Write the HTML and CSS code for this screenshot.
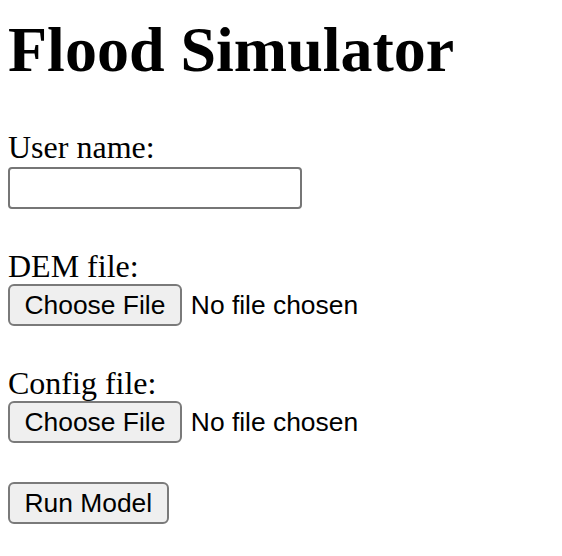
FILE: index.html
```html
<!DOCTYPE html>
<html lang="en">
<head>
<meta charset="utf-8">
<title>Flood Simulator</title>
<link rel="stylesheet" href="styles.css">
</head>
<body>
<h1 class="title">Flood Simulator</h1>
<form class="form">
  <div class="field">
    <label class="label" for="user">User name:</label>
    <input class="text-input" type="text" id="user" name="user">
  </div>
  <div class="field">
    <label class="label" for="dem">DEM file:</label>
    <input class="file-input" type="file" id="dem" name="dem">
  </div>
  <div class="field">
    <label class="label" for="config">Config file:</label>
    <input class="file-input" type="file" id="config" name="config">
  </div>
  <div class="field">
    <button class="button" type="submit">Run Model</button>
  </div>
</form>
</body>
</html>
```
FILE: styles.css
```css
html, body {
  margin: 0;
  padding: 0;
  background: #ffffff;
}

body {
  padding-left: 8px;
  font-family: "Liberation Serif", "Times New Roman", serif;
  color: #000000;
}

.title {
  margin: 13px 0 42px 0;
  font-size: 64px;
  line-height: 74px;
  font-weight: bold;
}

.form {
  display: flex;
  flex-direction: column;
  gap: 39px;
  margin: 0;
}

.field {
  display: flex;
  flex-direction: column;
  align-items: flex-start;
}

.label {
  display: block;
  font-size: 32px;
  line-height: 36px;
}

.text-input {
  box-sizing: border-box;
  margin: 2px 0 0 0;
  width: 294px;
  height: 42px;
  border: 2px solid #767676;
  border-radius: 4px;
  padding: 2px 4px;
  font-family: "Liberation Sans", Arial, sans-serif;
  font-size: 26.67px;
  background: #ffffff;
}

.file-input {
  margin: 0;
  padding: 0;
  font-family: "Liberation Sans", Arial, sans-serif;
  font-size: 26.4px;
  color: #000000;
  height: 42px;
  line-height: 38px;
}

.file-input::file-selector-button,
.button {
  box-sizing: border-box;
  height: 42px;
  margin: 0 9px 0 0;
  padding: 0 14.5px;
  border: 2px solid #7a7a7a;
  border-radius: 6px;
  background: #efefef;
  font-family: "Liberation Sans", Arial, sans-serif;
  font-size: 26.4px;
  color: #000000;
}

.button {
  margin: 0;
}
```
